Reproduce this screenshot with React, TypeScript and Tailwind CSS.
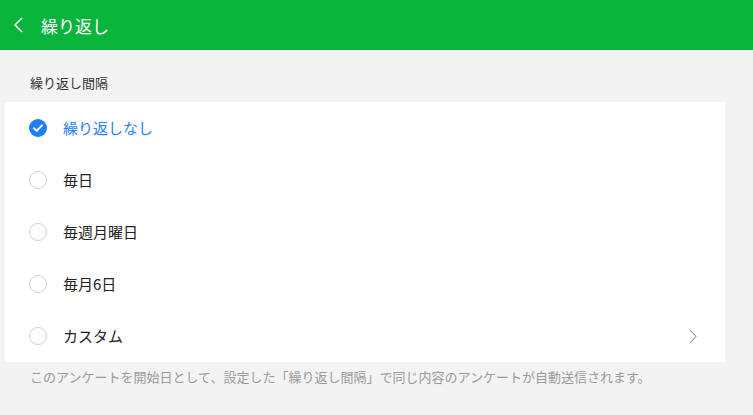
const OPTIONS = ['繰り返しなし', '毎日', '毎週月曜日', '毎月6日', 'カスタム'];

const Radio = ({ checked }: { checked: boolean }) =>
  checked ? (
    <svg width="18" height="18" viewBox="0 0 18 18">
      <circle cx="9" cy="9" r="9" fill="#1f7ef0" />
      <path d="M5 9.3l2.7 2.6L13 6.4" fill="none" stroke="#fff" strokeWidth="2" strokeLinecap="round" strokeLinejoin="round" />
    </svg>
  ) : (
    <span className="block w-[18px] h-[18px] rounded-full border border-[#cfcfcf] bg-white" />
  );

export default function App() {
  const selected = 0;

  return (
    <div
      className="w-[753px] h-[415px] bg-[#f3f3f3] flex flex-col overflow-hidden"
      style={{ fontFamily: '"Noto Sans CJK JP", "Noto Sans", sans-serif' }}
    >
      {/* Header */}
      <div className="h-[50px] bg-[#09b43b] flex items-center text-white shrink-0">
        <svg className="ml-[13px]" width="10" height="16" viewBox="0 0 10 16">
          <path d="M9 1L2 8l7 7" fill="none" stroke="#fff" strokeWidth="1.5" />
        </svg>
        <h1 className="ml-[18px] text-[17px] leading-none">繰り返し</h1>
      </div>

      <div className="pt-[24px] pb-[10px] pl-[30px] text-[13px] leading-[18px] text-[#333]">繰り返し間隔</div>

      <div className="ml-[5px] w-[720px] bg-white">
        {OPTIONS.map((label, i) => (
          <div key={label} className="h-[52px] flex items-center pl-[24px] pr-[28px]">
            <Radio checked={i === selected} />
            <span className={`ml-[16px] -mt-[2px] text-[15px] leading-none ${i === selected ? 'text-[#2a7ef0]' : 'text-[#222]'}`}>
              {label}
            </span>
            {label === 'カスタム' && (
              <svg className="ml-auto" width="8" height="15" viewBox="0 0 8 15">
                <path d="M1 1l6 6.5L1 14" fill="none" stroke="#999" strokeWidth="1.1" />
              </svg>
            )}
          </div>
        ))}
      </div>

      <p className="pt-[6px] pl-[30px] text-[13px] leading-[18px] text-[#9a9a9a]">
        このアンケートを開始日として、設定した「繰り返し間隔」で同じ内容のアンケートが自動送信されます。
      </p>
    </div>
  );
}
